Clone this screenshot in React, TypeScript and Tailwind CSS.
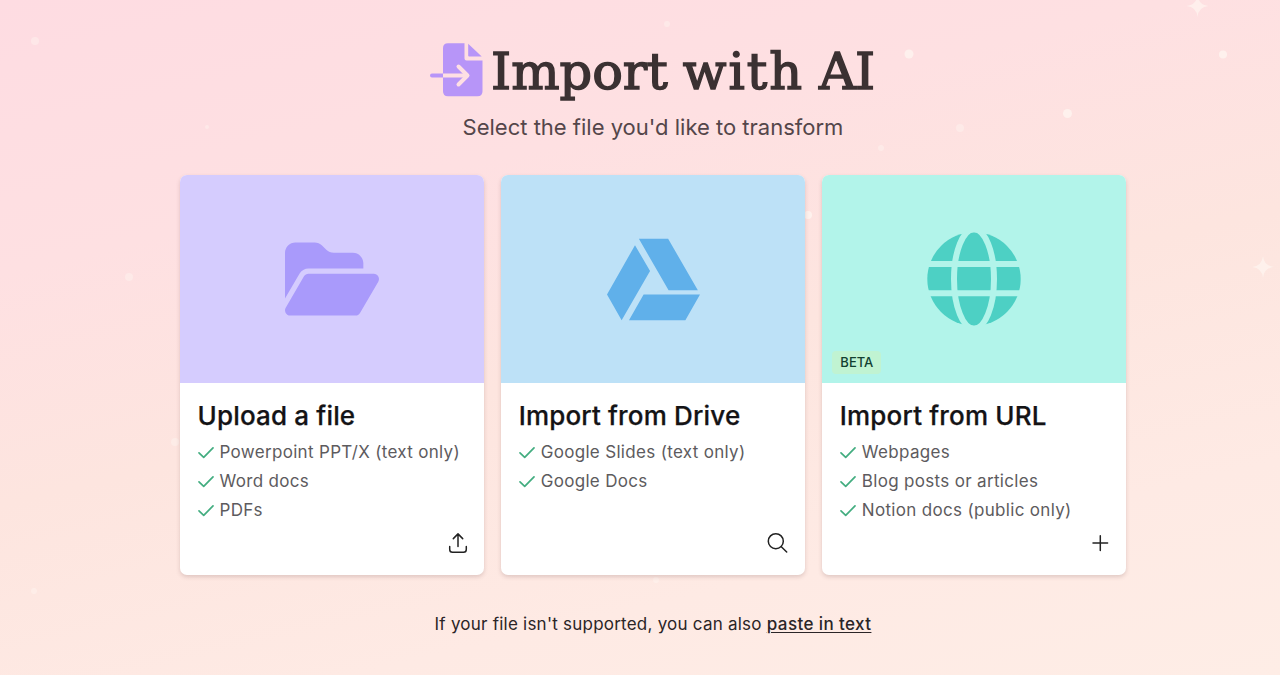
import type { ReactNode } from 'react';

function ImportIcon() {
  return (
    <svg className="h-[54px] w-[53px] shrink-0" viewBox="0 0 53 54">
      <path fill="#b795f8" d="M18 .3h16.500v15.200q0 2 2 2H52.500V48.300q0 5-5 5H18q-5 0-5-5V5.300q0-5 5-5z" />
      <path fill="#b795f8" d="M38.200.8 51.700 13.500H39.200q-1 0-1-1z" />
      <path fill="none" stroke="#b795f8" strokeWidth="4" strokeLinecap="round" d="M2 32.500h11" />
      <path fill="none" stroke="#fedfe4" strokeWidth="4" d="M13 32.500h24" />
      <path fill="none" stroke="#fedfe4" strokeWidth="4" strokeLinecap="round" strokeLinejoin="round" d="m28.500 23.500 9 9-9 9" />
    </svg>
  );
}

function FolderIcon() {
  return (
    <svg className="ml-px h-[84px] w-[94px]" viewBox="0 0 576 512" fill="#a99afb">
      <path d="M88.700 223.800 0 375.800V96c0-35.300 28.700-64 64-64h117.500c17 0 33.300 6.700 45.300 18.700l26.500 26.500c12 12 28.300 18.700 45.300 18.700H416c35.300 0 64 28.700 64 64v32H144c-22.800 0-43.800 12.100-55.300 31.800zm27.600 16.100c5.800-9.800 16.300-15.900 27.700-15.900h400c11.500 0 22 6.100 27.700 16.100s5.700 22.200-.1 32.100l-112 192C453.900 474 443.400 480 432 480H32c-11.500 0-22-6.100-27.700-16.100s-5.700-22.200.1-32.100z" />
    </svg>
  );
}

function DriveIcon() {
  return (
    <svg className="ml-px h-[93px] w-[93px]" viewBox="0 0 512 512" fill="#60b0ea">
      <path d="M339 314.900 175.400 32h161.200l163.600 282.900zM201.500 338.500 120.900 480h310.500L512 338.500zM154.100 67.400 0 338.500 80.600 480 237 208.800z" />
    </svg>
  );
}

function GlobeIcon() {
  return (
    <svg className="h-[94px] w-[94px]" viewBox="0 0 94 94">
      <circle cx="47" cy="47" r="46.700" fill="#4dd0c4" />
      <g fill="none" stroke="#b2f4ea" strokeWidth="6">
        <path d="M0 32h94M0 61.300h94" />
        <ellipse cx="47" cy="47" rx="20" ry="49.700" />
      </g>
    </svg>
  );
}

function CheckIcon() {
  return (
    <svg className="h-3 w-4 shrink-0" viewBox="0 0 16 12" fill="none" stroke="#43ad80" strokeWidth="1.700" strokeLinecap="round" strokeLinejoin="round">
      <path d="m1 5.800 4.700 4.600L15 .9" />
    </svg>
  );
}

const line = 'h-6 w-6 fill-none stroke-[#222] stroke-[1.5]';

function UploadIcon() {
  return (
    <svg className={line} viewBox="0 0 24 24" strokeLinecap="round" strokeLinejoin="round">
      <path d="M12 15.500V2.900M7.300 7.600 12 2.900l4.700 4.700M3.700 15.500v3q0 2.800 2.800 2.800h11q2.800 0 2.800-2.800v-3" />
    </svg>
  );
}

function SearchIcon() {
  return (
    <svg className={line} viewBox="0 0 24 24" strokeLinecap="round">
      <circle cx="8.800" cy="10.200" r="7.500" />
      <path d="m14.300 15.700 5.400 5.300" />
    </svg>
  );
}

function PlusIcon() {
  return (
    <svg className={line} viewBox="0 0 24 24" strokeLinecap="round">
      <path d="M12.300 4.800v14.600M5 12.100h14.600" />
    </svg>
  );
}

interface CardProps {
  title: string;
  items: string[];
  tint: string;
  icon: ReactNode;
  action: ReactNode;
  badge?: string;
}

function Card({ title, items, tint, icon, action, badge }: CardProps) {
  return (
    <section className="flex h-[400px] flex-col overflow-hidden rounded-[7px] bg-white shadow-[0_2px_4px_rgba(100,60,60,0.2)]">
      <div className={`relative flex h-[208px] shrink-0 items-center justify-center ${tint}`}>
        {icon}
        {badge && (
          <span className="absolute bottom-[9px] left-[10px] flex h-[23px] w-[49px] items-center justify-center rounded bg-[#c0f3d2] text-[13px] font-medium text-[#123f31]">
            {badge}
          </span>
        )}
      </div>
      <div className="flex flex-1 flex-col pt-[17px] pr-[14px] pb-5 pl-[17.5px]">
        <h2 className="text-[26px] leading-8 font-medium tracking-[0.17px] whitespace-nowrap text-[#141315] [-webkit-text-stroke:0.25px_#141315]">{title}</h2>
        <ul className="mt-1.5">
          {items.map((item) => (
            <li key={item} className="flex h-[29px] items-center gap-[6px] text-[17px] tracking-[0.32px] whitespace-nowrap text-[#5d5b5e]">
              <CheckIcon />
              {item}
            </li>
          ))}
        </ul>
        <div className="mt-auto flex justify-end">{action}</div>
      </div>
    </section>
  );
}

function Sparkles() {
  return (
    <svg className="pointer-events-none absolute inset-0 h-full w-full" viewBox="0 0 1280 675" fill="#fff8f3">
      <g opacity=".7">
        <circle cx="909" cy="54" r="4.500" />
        <circle cx="1223" cy="54.500" r="4" />
        <circle cx="1067.500" cy="113.500" r="4.500" />
        <circle cx="808" cy="215" r="4" />
      </g>
      <g opacity=".4">
        <circle cx="35" cy="41" r="4" />
        <circle cx="129" cy="277" r="4" />
        <circle cx="175" cy="442" r="4" />
        <circle cx="960" cy="128" r="4" />
        <circle cx="881" cy="148" r="3" />
        <circle cx="667" cy="24" r="3" />
        <circle cx="34" cy="591" r="3" />
        <circle cx="656" cy="580" r="3" />
        <circle cx="207" cy="127" r="2" />
      </g>
      <g opacity=".6">
        <path d="M1197.500-5q1 10 11 11-10 1-11 11-1-10-11-11 10-1 11-11zM1263 256q1 10 11 11-10 1-11 11-1-10-11-11 10-1 11-11z" />
      </g>
    </svg>
  );
}

export default function App() {
  return (
    <main className="relative h-[675px] w-[1280px] overflow-hidden bg-[linear-gradient(167deg,#fedce2_0%,#fee0e2_28%,#fde5df_52%,#feeae4_78%,#feede6_100%)] font-['Inter',sans-serif]">
      <Sparkles />
      <div className="relative ml-[180px] flex w-[946px] flex-col">
        <header className="flex flex-col items-center">
          <div className="mt-[43px] flex h-[54px] w-full justify-start pl-[250px]">
            <ImportIcon />
            <h1 className="mt-px ml-[8px] flex gap-[15px] font-['DejaVu_Serif',serif] text-[51px] leading-[56px] whitespace-nowrap text-[#3b3132] [-webkit-text-stroke:1.5px_#3b3132]">
              <span>Import</span>
              <span className="tracking-[2px]">with</span>
              <span className="tracking-[-1px]">AI</span>
            </h1>
          </div>
          <p className="mt-[14px] text-[22px] leading-8 text-[#54464a]">Select the file you'd like to transform</p>
        </header>
        <div className="mt-8 grid grid-cols-3 gap-[17.5px]">
          <Card
            title="Upload a file"
            items={['Powerpoint PPT/X (text only)', 'Word docs', 'PDFs']}
            tint="bg-[#d5ccfe]"
            icon={<FolderIcon />}
            action={<UploadIcon />}
          />
          <Card
            title="Import from Drive"
            items={['Google Slides (text only)', 'Google Docs']}
            tint="bg-[#bde1f7]"
            icon={<DriveIcon />}
            action={<SearchIcon />}
          />
          <Card
            title="Import from URL"
            items={['Webpages', 'Blog posts or articles', 'Notion docs (public only)']}
            tint="bg-[#b2f4ea]"
            icon={<GlobeIcon />}
            action={<PlusIcon />}
            badge="BETA"
          />
        </div>
        <p className="mt-[37px] text-center text-[17px] leading-6 tracking-[0.23px] text-[#2b2527]">
          If your file isn't supported, you can also{' '}
          <a href="#" className="font-medium underline decoration-1 underline-offset-2 tracking-[0.4px]">paste in text</a>
        </p>
      </div>
    </main>
  );
}
